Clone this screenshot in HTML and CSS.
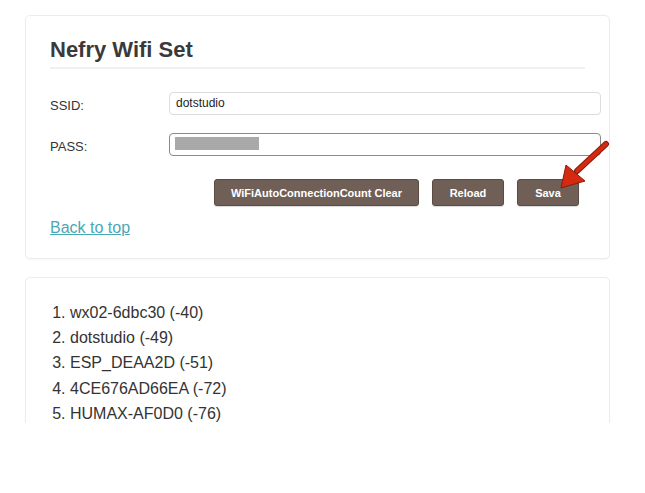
FILE: index.html
```html
<!DOCTYPE html>
<html>
<head>
<meta charset="utf-8">
<link rel="stylesheet" href="styles.css">
</head>
<body>
<div class="page">
  <div class="card card-form">
    <h1 class="title">Nefry Wifi Set</h1>
    <div class="form">
      <div class="row">
        <label class="label">SSID:</label>
        <div class="input input-ssid">dotstudio</div>
      </div>
      <div class="row">
        <label class="label">PASS:</label>
        <div class="input input-pass"><span class="masked"></span></div>
      </div>
      <div class="buttons">
        <button class="btn btn-clear">WiFiAutoConnectionCount Clear</button>
        <button class="btn btn-reload">Reload</button>
        <button class="btn btn-save">Sava</button>
      </div>
    </div>
    <a class="back" href="#">Back to top</a>
    <svg class="arrow" width="60" height="60" viewBox="0 0 60 60">
      <path d="M49 4 L20 31" stroke="#8a1a0a" stroke-width="6" stroke-linecap="round" fill="none"/>
      <path d="M49 4 L20 31" stroke="#d42a12" stroke-width="4" stroke-linecap="round" fill="none"/>
      <path d="M9 25 L28 41 L4 48 Z" fill="#d42a12" stroke="#8a1a0a" stroke-width="1" stroke-linejoin="round"/>
    </svg>
  </div>
  <div class="card card-list">
    <ol class="list">
      <li>wx02-6dbc30 (-40)</li>
      <li>dotstudio (-49)</li>
      <li>ESP_DEAA2D (-51)</li>
      <li>4CE676AD66EA (-72)</li>
      <li>HUMAX-AF0D0 (-76)</li>
    </ol>
  </div>
</div>
</body>
</html>
```

FILE: styles.css
```css
html, body {
  margin: 0;
  padding: 0;
  background: #fff;
}
body {
  font-family: "Liberation Sans", Arial, Helvetica, sans-serif;
  color: #333;
}
.page {
  height: 423px;
  overflow: hidden;
  padding: 15px 0 0 25px;
  box-sizing: border-box;
  display: flex;
  flex-direction: column;
  gap: 18px;
}
.card {
  width: 585px;
  box-sizing: border-box;
  border: 1px solid #ececec;
  border-radius: 5px;
  box-shadow: 0 1px 2px rgba(0,0,0,0.04);
  background: #fff;
  flex-shrink: 0;
}
.card-form {
  position: relative;
  height: 244px;
  padding: 21px 24px 0 24px;
}
.title {
  margin: 0;
  font-size: 22px;
  line-height: 26px;
  font-weight: bold;
  color: #3a3a3a;
  padding-bottom: 4px;
  border-bottom: 2px solid #f0f0f0;
}
.form {
  margin-top: 23px;
  display: flex;
  flex-direction: column;
  gap: 18px;
}
.row {
  display: flex;
  align-items: center;
}
.label {
  width: 119px;
  flex-shrink: 0;
  font-size: 13px;
  color: #333;
  padding-top: 3px;
}
.input {
  width: 432px;
  flex-shrink: 0;
  height: 23px;
  box-sizing: border-box;
  border: 1px solid #dcdcdc;
  border-radius: 4px;
  background: #fff;
  font-size: 12px;
  line-height: 21px;
  padding-left: 6px;
  color: #222;
}
.input-pass {
  border-color: #8f8a86;
  padding-left: 5px;
  padding-top: 3px;
}
.masked {
  display: block;
  width: 84px;
  height: 13px;
  background: #a9a9a9;
}
.buttons {
  display: flex;
  justify-content: flex-end;
  gap: 13px;
  padding-right: 6px;
  margin-top: 5px;
}
.btn {
  height: 27px;
  flex-shrink: 0;
  white-space: nowrap;
  border: 1px solid #5a4b43;
  border-radius: 3px;
  background: #705f56;
  color: #fff;
  font-family: "Liberation Sans", Arial, sans-serif;
  font-weight: bold;
  font-size: 11px;
  padding: 0;
  box-shadow: 0 1px 1px rgba(0,0,0,0.15);
}
.btn-clear { width: 205px; }
.btn-reload { width: 72px; }
.btn-save { width: 62px; }
.back {
  display: inline-block;
  margin-top: 12px;
  font-size: 16px;
  line-height: 20px;
  color: #4aa7b6;
  text-decoration: underline;
}
.arrow {
  position: absolute;
  left: 531px;
  top: 124px;
}
.card-list {
  height: 300px;
  padding: 22px 24px 0 24px;
}
.list {
  margin: 0;
  padding-left: 20px;
  font-size: 16px;
  line-height: 25.2px;
  color: #333;
}
.list li {
  padding-left: 0;
}
```
